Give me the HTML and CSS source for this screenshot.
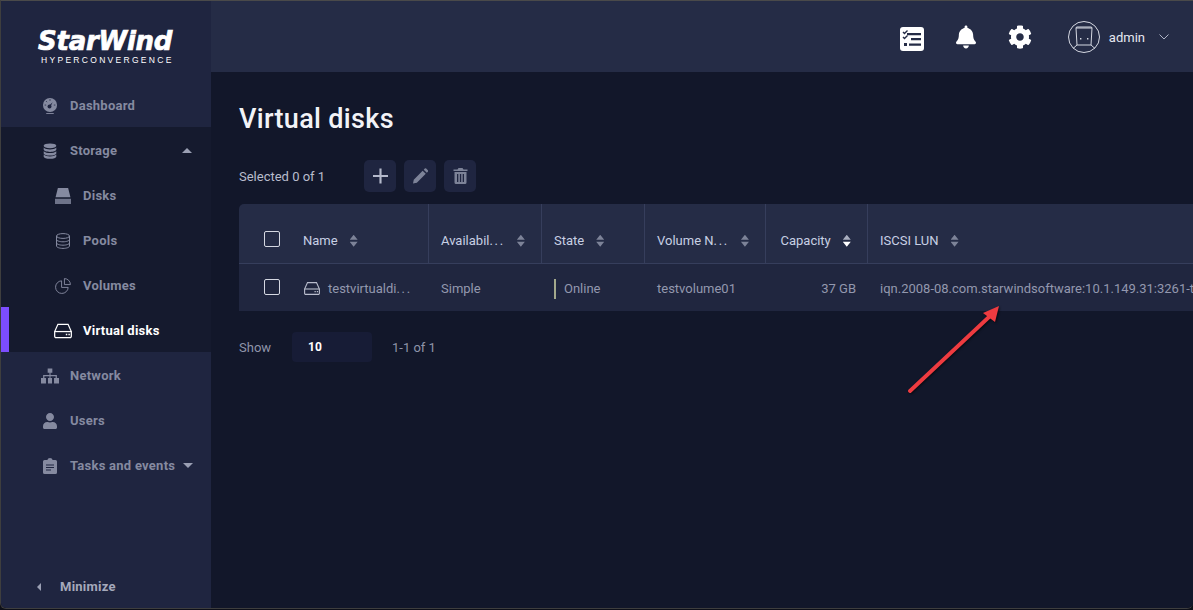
FILE: index.html
```html
<!DOCTYPE html>
<html lang="en">
<head>
<meta charset="utf-8">
<title>Virtual disks</title>
<link rel="stylesheet" href="styles.css">
</head>
<body>
<div class="window">
  <aside class="sidebar">
    <div class="logo">
      <div class="logo-name">StarWind</div>
      <div class="logo-sub">HYPERCONVERGENCE</div>
    </div>
    <nav class="nav">
      <a class="item"><svg class="ic" viewBox="0 0 16 17"><path d="M8 0a7.500 7.500 0 1 0 0 15A7.500 7.500 0 0 0 8 0z" fill="currentColor"/><path d="M8 1.200v1.800M2.300 7.500h1.600M12.100 7.500h1.600M3.800 3.300l1.100 1.100" stroke="#1f2540" stroke-width=".8"/><circle cx="7.500" cy="9" r="2.100" fill="#1f2540"/><path d="M6.500 8.500l4.300-4-2.600 5.300z" fill="#1f2540"/><path d="M4 16.500h8" stroke="currentColor"/></svg><span>Dashboard</span></a>
      <div class="group">
        <a class="item"><svg class="ic" viewBox="0 0 14 16"><g fill="currentColor"><ellipse cx="7" cy="2.8" rx="6.3" ry="2.4"/><path d="M.7 4.6v2c0 1.3 2.8 2.4 6.3 2.4s6.300-1.100 6.300-2.400v-2C12 6 9.500 6.500 7 6.500S2 6 .7 4.600z"/><path d="M.7 8.200v2c0 1.300 2.800 2.400 6.300 2.400s6.300-1.100 6.300-2.400v-2C12 9.600 9.500 10 7 10S2 9.600.7 8.200z"/><path d="M.7 11.600v1.800c0 1.300 2.800 2.400 6.300 2.400s6.300-1.100 6.300-2.400v-1.800C12 13 9.500 13.400 7 13.400S2 13 .7 11.600z"/></g></svg><span>Storage</span><i class="caret up"></i></a>
        <a class="item sub"><svg class="ic" viewBox="0 0 14 14"><path d="M2.500 0h9l2 8H.5z" fill="currentColor"/><path d="M0 9.500h14V14H0z" fill="currentColor" opacity=".8"/></svg><span>Disks</span></a>
        <a class="item sub"><svg class="ic" viewBox="0 0 16 16"><g fill="none" stroke="currentColor"><ellipse cx="8" cy="3" rx="6.500" ry="2.400"/><path d="M1.500 3v10c0 1.300 2.900 2.400 6.500 2.400s6.500-1.100 6.500-2.400V3M1.500 6.400c0 1.300 2.900 2.400 6.500 2.400s6.500-1.100 6.500-2.400M1.500 9.800c0 1.300 2.900 2.400 6.500 2.400s6.500-1.100 6.500-2.400"/></g></svg><span>Pools</span></a>
        <a class="item sub"><svg class="ic" viewBox="0 0 17 17"><g fill="none" stroke="currentColor"><path d="M7 3a6.700 6.700 0 1 0 7 7H7z"/><path d="M10 .6a6.500 6.500 0 0 1 6.400 6.400H10z"/></g></svg><span>Volumes</span></a>
        <a class="item sub active"><svg class="ic" viewBox="0 0 16 13"><g fill="none" stroke="currentColor" stroke-width="1.100"><path d="M3.500.6h9L15.400 7v4.200a1.200 1.200 0 0 1-1.200 1.200H1.800A1.200 1.200 0 0 1 .6 11.200V7z"/><path d="M.6 7h14.800"/></g><path d="M10.500 9h1.300v1.300h-1.300zM12.800 9h1.300v1.300h-1.300z" fill="currentColor"/></svg><span>Virtual disks</span></a>
      </div>
      <a class="item"><svg class="ic" viewBox="0 0 17 14"><path fill="currentColor" d="M6.300 0h4.400v4H9v2h6v2.800h2V14h-4.700V8.800h1.500V7.200H9v1.600h1.400V14H6.600V8.800H8V7.200H3.200v1.600h1.500V14H0V8.800h2V6h6V4H6.300z"/></svg><span>Network</span></a>
      <a class="item"><svg class="ic" viewBox="0 0 448 512"><path fill="currentColor" d="M224 256c70.700 0 128-57.300 128-128S294.700 0 224 0 96 57.300 96 128s57.300 128 128 128zm89.600 32h-16.700c-22.200 10.200-46.900 16-72.900 16s-50.600-5.800-72.900-16h-16.700C60.200 288 0 348.200 0 422.400V464c0 26.500 21.500 48 48 48h352c26.500 0 48-21.500 48-48v-41.600c0-74.200-60.200-134.400-134.400-134.400z"/></svg><span>Users</span></a>
      <a class="item"><svg class="ic" viewBox="0 0 14 16"><path fill="currentColor" d="M1.500 2H4.500C4.500.9 5.700 0 7 0s2.500.9 2.500 2h3A1.500 1.500 0 0 1 14 3.500v11a1.500 1.500 0 0 1-1.500 1.500h-11A1.500 1.500 0 0 1 0 14.500v-11A1.500 1.500 0 0 1 1.500 2z"/><path d="M3 7h8M3 9.500h8M3 12h5" stroke="#1f2540" stroke-width="1.100"/></svg><span>Tasks and events</span><i class="caret down"></i></a>
    </nav>
    <a class="minimize"><i class="caret left"></i><span>Minimize</span></a>
  </aside>
  <div class="content">
    <header class="topbar">
      <svg class="top-ic tasks" viewBox="0 0 24 24"><rect width="24" height="24" rx="3" fill="#fff"/><path d="M7 6h14v2.200H7zM11 11h10v2.200H11zM9 16.500h12v2.200H9z" fill="#252c46"/><path d="M3 5l1.500 1.500L7.500 3.500M3 10l1.500 1.500L7.500 8.500" fill="none" stroke="#252c46" stroke-width="1.400"/><rect x="4" y="16" width="3" height="3" fill="#252c46"/></svg>
      <svg class="top-ic bell" viewBox="0 0 448 512"><path fill="#fff" d="M224 512c35.320 0 63.970-28.650 63.970-64H160.030c0 35.350 28.650 64 63.970 64zm215.390-149.710c-19.320-20.760-55.470-51.990-55.470-154.290 0-77.700-54.480-139.900-127.940-155.160V32c0-17.670-14.320-32-31.980-32s-31.980 14.330-31.980 32v20.840C118.560 68.100 64.080 130.300 64.080 208c0 102.300-36.150 133.530-55.470 154.290-6 6.450-8.660 14.160-8.610 21.710.11 16.400 12.980 32 32.100 32h383.800c19.120 0 32-15.600 32.100-32 .05-7.550-2.610-15.270-8.610-21.710z"/></svg>
      <svg class="top-ic gear" viewBox="0 0 512 512"><path fill="#fff" d="M487.400 315.700l-42.600-24.600c4.300-23.200 4.300-47 0-70.200l42.600-24.600c4.900-2.800 7.100-8.600 5.500-14-11.100-35.600-30-67.800-54.700-94.600-3.800-4.100-10-5.100-14.800-2.300L380.800 110c-17.900-15.400-38.500-27.300-60.800-35.100V25.800c0-5.600-3.900-10.500-9.400-11.700-36.700-8.200-74.300-7.800-109.200 0-5.500 1.200-9.400 6.100-9.400 11.700V75c-22.200 7.900-42.800 19.800-60.800 35.100L88.700 85.500c-4.900-2.800-11-1.900-14.800 2.300-24.700 26.700-43.600 58.900-54.700 94.600-1.700 5.400.6 11.200 5.500 14L67.300 221c-4.300 23.200-4.300 47 0 70.200l-42.600 24.600c-4.900 2.800-7.100 8.600-5.500 14 11.100 35.600 30 67.800 54.700 94.600 3.800 4.100 10 5.100 14.800 2.300l42.600-24.600c17.900 15.400 38.500 27.300 60.800 35.100v49.200c0 5.600 3.900 10.500 9.400 11.700 36.700 8.200 74.300 7.800 109.200 0 5.500-1.200 9.400-6.100 9.400-11.700v-49.200c22.200-7.900 42.800-19.800 60.800-35.100l42.600 24.600c4.900 2.800 11 1.900 14.800-2.300 24.700-26.700 43.600-58.900 54.700-94.600 1.500-5.500-.7-11.300-5.600-14.100zM256 336c-44.100 0-80-35.900-80-80s35.900-80 80-80 80 35.900 80 80-35.900 80-80 80z"/></svg>
      <div class="user">
        <svg class="avatar" viewBox="0 0 32 32"><g fill="none" stroke="#d5d8e2"><circle cx="16" cy="16" r="15.500"/><path d="M8 7h16l-1 17H9zM9 24l-4 3.500M23 24l4 3.500M8 7l.5-1h15l.5 1"/></g><path d="M12 17h1.400v1.400H12zM19 17h1.400v1.400H19z" fill="#d5d8e2"/></svg>
        <span class="user-name">admin</span>
        <svg class="chev" viewBox="0 0 10 6"><path d="M.5.500L5 5 9.500.5" fill="none" stroke="#aeb3c6"/></svg>
      </div>
    </header>
    <main class="main">
      <h1 class="title">Virtual disks</h1>
      <div class="toolbar">
        <span class="selected">Selected 0 of 1</span>
        <button class="tool"><svg viewBox="0 0 14 14"><path d="M7 0v14M0 7h14" stroke="#b4b9cb" stroke-width="2"/></svg></button>
        <button class="tool"><svg viewBox="0 0 14 14"><path fill="#7d8398" d="M0 14l.7-3.600L9 2.100l2.900 2.900-8.300 8.300zM10 1.100l1-1a1 1 0 0 1 1.300 0l1.600 1.600a1 1 0 0 1 0 1.300l-1 1z"/></svg></button>
        <button class="tool"><svg viewBox="0 0 14 16"><path fill="#7d8398" d="M5 0h4l1 1.500h4V3H0V1.500h4zM1 4h12v10.500a1.500 1.500 0 0 1-1.500 1.500h-9A1.500 1.500 0 0 1 1 14.500zm2.500 2v8h1.300V6zm2.900 0v8h1.300V6zm2.800 0v8h1.300V6z"/></svg></button>
      </div>
      <table class="grid">
        <colgroup><col class="c-check"><col class="c-name"><col class="c-avail"><col class="c-state"><col class="c-vol"><col class="c-cap"><col></colgroup>
        <thead>
          <tr>
            <th class="check-cell"><span class="box"></span></th>
            <th class="sep"><span class="th"><span>Name</span><i class="sort"></i></span></th>
            <th class="sep"><span class="th"><span>Availabil<span class="ell">...</span></span><i class="sort"></i></span></th>
            <th class="sep"><span class="th"><span>State</span><i class="sort"></i></span></th>
            <th class="sep"><span class="th"><span>Volume N<span class="ell">...</span></span><i class="sort"></i></span></th>
            <th class="sep cap-head"><span class="th"><span>Capacity</span><i class="sort on"></i></span></th>
            <th><span class="th"><span>ISCSI LUN</span><i class="sort"></i></span></th>
          </tr>
        </thead>
        <tbody>
          <tr>
            <td class="check-cell"><span class="box"></span></td>
            <td><span class="name-cell"><svg class="disk" viewBox="0 0 16 13"><g fill="none" stroke="#b9bdcd" stroke-width="1.100"><path d="M3.500.6h9L15.400 7v4.200a1.200 1.200 0 0 1-1.200 1.200H1.800A1.200 1.200 0 0 1 .6 11.200V7z"/><path d="M.6 7h14.800"/></g><path d="M10.500 9h1.300v1.300h-1.300zM12.800 9h1.300v1.300h-1.300z" fill="#b9bdcd"/></svg><span>testvirtualdi<span class="ell">...</span></span></span></td>
            <td>Simple</td>
            <td><span class="state">Online</span></td>
            <td>testvolume01</td>
            <td class="num">37 GB</td>
            <td class="lun">iqn.2008-08.com.starwindsoftware:10.1.149.31:3261-t</td>
          </tr>
        </tbody>
      </table>
      <div class="pager">
        <span class="show">Show</span>
        <span class="size">10</span>
        <span class="range">1-1 of 1</span>
      </div>
    </main>
  </div>
  <svg class="arrow" viewBox="0 0 100 95"><g class="arrow-shadow"><path d="M5 87L84 13" stroke="#ee3b40" stroke-width="3.800" stroke-linecap="round"/><path d="M94 2L78 9l12 9z" fill="#ee3b40"/></g></svg>
</div>
</body>
</html>
```
FILE: styles.css
```css
* { box-sizing: border-box; }
html, body { margin: 0; height: 100%; background: #0d0f18; }
body {
  font-family: Roboto, "Noto Sans", sans-serif;
  font-size: 13px;
  color: #b9bdcd;
  overflow: hidden;
}
.window {
  position: relative;
  display: flex;
  height: 609px;
  border-top: 1px solid #4a4a4a;
  border-left: 1px solid #3e3e3e;
  border-bottom: 1px solid #3e3e3e;
  border-bottom-left-radius: 6px;
  border-bottom-right-radius: 6px;
  overflow: hidden;
}
.sidebar {
  width: 210px;
  flex: none;
  display: flex;
  flex-direction: column;
  background: #1f2540;
}
.logo {
  height: 81px;
  padding: 27px 0 0 37px;
  color: #fff;
}
.logo-name {
  font: italic 700 26px/26px "DejaVu Sans", sans-serif;
  -webkit-text-stroke: 0.7px #fff;
  letter-spacing: -0.25px;
  white-space: nowrap;
}
.logo-sub {
  font: 400 8.5px/10px "Liberation Sans", sans-serif;
  letter-spacing: 2.3px;
  margin-top: 1px;
  padding-left: 3px;
  white-space: nowrap;
}
.nav { display: flex; flex-direction: column; }
.group { background: #151a2e; }
.item {
  position: relative;
  display: flex;
  align-items: center;
  height: 45px;
  padding: 2px 0 0 40px;
  font-weight: 700;
  letter-spacing: .25px;
  color: #858aa0;
  white-space: nowrap;
}
.ic {
  width: 18px;
  height: 16px;
  flex: none;
  margin-right: 11px;
}
.item.sub { padding-left: 53px; }
.item.active { color: #fff; }
.item.active::before {
  content: "";
  position: absolute;
  left: 0;
  top: 0;
  bottom: 0;
  width: 8px;
  background: #7c4dff;
}
.caret {
  width: 0;
  height: 0;
  border-left: 5px solid transparent;
  border-right: 5px solid transparent;
}
.caret.up { border-bottom: 5px solid #9a9fb3; margin-left: auto; margin-right: 19px; }
.caret.down { border-top: 5px solid #9a9fb3; margin-left: 8px; }
.caret.left {
  border: 0;
  border-top: 4px solid transparent;
  border-bottom: 4px solid transparent;
  border-right: 4px solid #9a9fb3;
  margin-right: 19px;
}
.minimize {
  margin-top: auto;
  height: 45px;
  display: flex;
  align-items: center;
  padding: 2px 0 0 36px;
  font-weight: 700;
  letter-spacing: .25px;
  color: #a5a9bb;
}
.content {
  flex: 1;
  min-width: 0;
  display: flex;
  flex-direction: column;
  background: #12172a;
}
.topbar {
  height: 71px;
  flex: none;
  display: flex;
  align-items: center;
  justify-content: flex-end;
  background: #252c46;
  padding-right: 24px;
}
.top-ic { flex: none; }
.tasks { width: 24px; height: 24px; margin: 4px 32px 0 0; }
.bell { width: 20px; height: 24px; margin-right: 32px; }
.gear { width: 24px; height: 24px; margin-right: 36px; }
.user { display: flex; align-items: center; }
.avatar { width: 32px; height: 32px; margin-right: 9px; }
.user-name { color: #e6e8f0; margin: 2px 14px 0 0; }
.chev { width: 10px; height: 6px; }
.main { flex: 1; padding: 0 0 0 28px; min-width: 0; overflow: hidden; }
.title {
  margin: 27px 0 0;
  font-size: 27px;
  line-height: 40px;
  font-weight: 500;
  letter-spacing: .33px;
  color: #f2f3f7;
}
.toolbar {
  display: flex;
  align-items: center;
  gap: 8px;
  margin-top: 21px;
}
.selected { width: 117px; color: #b9bdcd; }
.tool {
  width: 32px;
  height: 32px;
  padding: 0;
  border: 0;
  border-radius: 5px;
  background: #1f2540;
  display: flex;
  align-items: center;
  justify-content: center;
}
.tool svg { width: 15px; height: 16px; }
.grid {
  width: 954px;
  margin-top: 12px;
  table-layout: fixed;
  border-collapse: collapse;
}
.c-check { width: 52px; }
.c-name { width: 137px; }
.c-avail { width: 113px; }
.c-state { width: 103px; }
.c-vol { width: 121px; }
.c-cap { width: 102px; }
.grid th {
  height: 59px;
  padding: 15px 12px 0;
  background: #252c46;
  border-bottom: 1px solid #363e5c;
  text-align: left;
  font-weight: 400;
  color: #c8d0e4;
}
.grid th.sep { border-right: 1px solid #363e5c; }
.grid th:first-child { border-top-left-radius: 5px; }
.grid td {
  height: 48px;
  padding: 3px 12px 0;
  background: #20263f;
  color: #9398ae;
  white-space: nowrap;
  overflow: hidden;
}
.grid th:nth-child(n+3) { padding-left: 12.5px; }
.grid td:nth-child(n+3) { padding-left: 13px; }
.grid th.check-cell { padding: 12px 0 0 25px; }
.grid td.check-cell { padding: 0 0 0 25px; }
.grid th.cap-head { padding-left: 15px; }
.grid td.num { padding-right: 11px; text-align: right; }
.box {
  display: block;
  width: 16px;
  height: 16px;
  border: 1px solid #d5d8e2;
  border-radius: 2px;
}
.th { display: flex; align-items: center; gap: 12px; white-space: nowrap; }
.ell { letter-spacing: 1.7px; }
.sort {
  flex: none;
  width: 8px;
  height: 12px;
  background: #7d8398;
  clip-path: polygon(50% 0, 100% 42%, 0 42%, 0 58%, 100% 58%, 50% 100%, 0 58%, 0 42%);
}
.sort.on { background: linear-gradient(#a9aebf 50%, #fff 50%); }
.name-cell { display: flex; align-items: center; gap: 8px; }
.disk { width: 16px; height: 13px; flex: none; margin-left: 1px; }
.state {
  display: inline-block;
  padding-left: 8px;
  line-height: 20px;
  border-left: 2px solid #a3a88c;
}
.pager { display: flex; align-items: center; margin-top: 21px; }
.show { width: 53px; color: #8f94a9; }
.size {
  width: 80px;
  height: 30px;
  padding-left: 16px;
  line-height: 30px;
  border-radius: 4px;
  background: #171c36;
  color: #fff;
  font-weight: 700;
  font-size: 12px;
}
.range { margin-left: 20px; color: #8f94a9; }
.arrow {
  position: absolute;
  left: 904px;
  top: 303px;
  width: 100px;
  height: 95px;
}
.arrow-shadow { filter: drop-shadow(1px 1px 1px rgba(0,0,0,.6)); }
```
